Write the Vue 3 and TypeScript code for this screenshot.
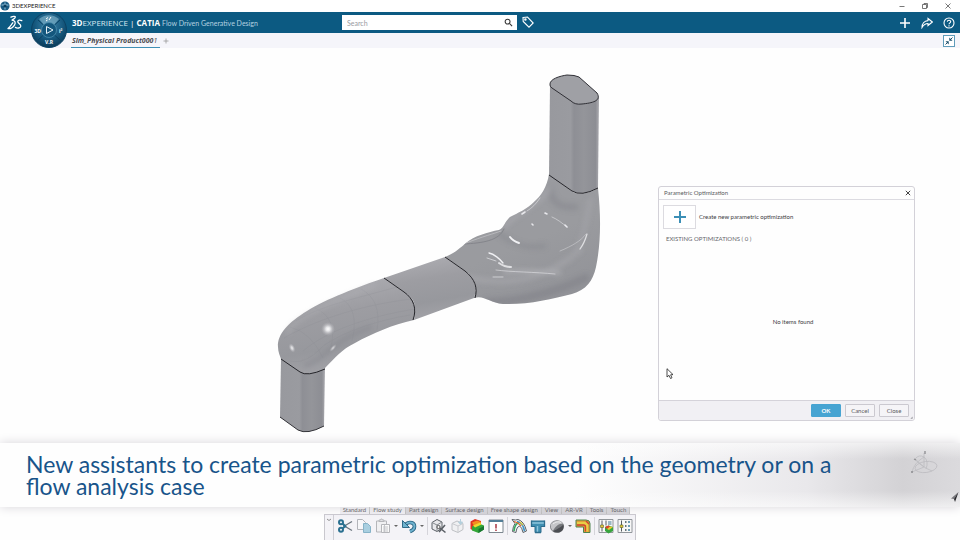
<script setup lang="ts">
import { ref } from 'vue'

type Tool = { id: string; label: string; kind: 'button' | 'caret' | 'sep' }

const query = ref('')
const sections: string[] = [
  'Standard', 'Flow study', 'Part design', 'Surface design', 'Free shape design',
  'View', 'AR-VR', 'Tools', 'Touch',
]
const activeSection = ref('Flow study')

const btn = (id: string, label: string): Tool => ({ id, label, kind: 'button' })
const caret = (id: string, label: string): Tool => ({ id, label, kind: 'caret' })
const sep = (id: string): Tool => ({ id, label: '', kind: 'sep' })

const tools: Tool[] = [
  btn('cut', 'Cut'), btn('copy', 'Copy'), btn('paste', 'Paste'), caret('paste-more', 'Paste options'),
  btn('undo', 'Undo'), caret('undo-more', 'Undo history'), sep('s1'),
  btn('update', 'Update'), btn('import', 'Import'), btn('result', 'Results'), btn('report', 'Report'), sep('s2'),
  btn('flow', 'Flow path'), btn('tee', 'Pipe'), btn('sphere', 'Material'), caret('sphere-more', 'Material options'),
  btn('elbow', 'Optimized shape'), sep('s3'),
  btn('tune', 'Parametric study'), btn('compare', 'Compare'),
]
</script>

<template>
  <div class="app">
    <header class="titlebar">
      <svg class="app-icon" viewBox="0 0 10 10" aria-hidden="true">
        <circle cx="5" cy="5" r="4.6" fill="#1b5c83" />
        <path d="M1.5 4h7M5 1.500v7" stroke="#9cc6dc" stroke-width="1" />
        <circle cx="5" cy="5" r="1.500" fill="#0b3c5c" />
      </svg>
      <span class="app-name">3DEXPERIENCE</span>
      <div class="window-buttons">
        <button aria-label="Minimize"><svg viewBox="0 0 8 8"><path d="M1.500 4.500h5" /></svg></button>
        <button aria-label="Restore"><svg viewBox="0 0 8 8"><path d="M1.500 2.500h4v4h-4zM3 2.500v-1h3.500v4h-1" /></svg></button>
        <button aria-label="Close window"><svg viewBox="0 0 8 8"><path d="M1.500 1.500l5 5M6.500 1.500l-5 5" /></svg></button>
      </div>
    </header>

    <div class="topbar">
      <svg class="ds-logo" viewBox="0 0 16 16" aria-label="Company logo">
        <g fill="none" stroke="#fff" stroke-width="1.300" stroke-linecap="round" stroke-linejoin="round">
          <path d="M4 2.200C6 1.200 8 1 8.300 1.800C8.500 2.600 7 3.800 5.200 5" />
          <path d="M5.200 5.200C8 5.800 9 7.400 7.600 9.800C6.200 12.200 3.400 13.800 1 13.600C2.600 12.400 4.800 9.200 5.800 7.800" />
          <path d="M14.800 5.600C13 4.600 10.800 5 10.800 6.600C10.900 8.600 14 9.200 13.800 11.200C13.600 13.200 10.200 13.600 8.400 12.400" />
        </g>
      </svg>
      <button class="compass" aria-label="Compass">
        <svg viewBox="0 0 36 36">
          <defs>
            <radialGradient id="compassBall" cx=".5" cy=".35" r=".65">
              <stop offset="0" stop-color="#3f86ab" />
              <stop offset=".6" stop-color="#175a80" />
              <stop offset="1" stop-color="#0a3a58" />
            </radialGradient>
          </defs>
          <circle cx="18" cy="18" r="17.500" fill="url(#compassBall)" stroke="#0b4264" />
          <path d="M8 7A15 15 0 0 1 28 7L23 13A7 7 0 0 0 13 13Z" fill="#8fbdd2" opacity=".55" />
          <path d="M7 8L12.500 13M29 8L23.500 13M7 28L12.500 23M29 28L23.500 23" stroke="#0b4264" />
          <circle cx="18" cy="18" r="7.500" fill="#14577d" stroke="#4b8dad" stroke-width=".8" />
          <path d="M15.500 14.500L22 18L15.500 21.500Z" fill="none" stroke="#e6f2f8" />
          <path d="M15 7l2-1.500M18 8l2-3M15 9l1.500-1" stroke="#fff" stroke-width="1" />
          <text x="3.500" y="20.500">3D</text>
          <text x="28" y="20.500">i²</text>
          <text x="14" y="31.500">V.R</text>
        </svg>
      </button>
      <div class="brand"><b>3D</b>EXPERIENCE <i>|</i> <b>CATIA</b> <span>Flow Driven Generative Design</span></div>
      <form class="search" role="search" @submit.prevent>
        <input v-model="query" type="search" aria-label="Search" placeholder="Search" />
        <button type="submit" aria-label="Run search">
          <svg viewBox="0 0 10 10"><circle cx="4" cy="4" r="2.700" /><path d="M6 6l3 3" /></svg>
        </button>
      </form>
      <button class="tag" aria-label="Tags">
        <svg viewBox="0 0 12 12"><path d="M1 1.500L5.500 1L11.200 7L7 11.200L1.200 5.500Z" /><circle cx="3.400" cy="3.600" r=".7" /></svg>
      </button>
      <div class="top-actions">
        <button aria-label="Add"><svg viewBox="0 0 12 12"><path d="M6 1v10M1 6h10" stroke-width="1.600" /></svg></button>
        <button aria-label="Share"><svg viewBox="0 0 12 12"><path d="M7 1.500L11.300 5L7 8.500V6.500C4 6.500 2.500 8 1 10.500C1 6.500 3.500 3.800 7 3.600Z" /></svg></button>
        <button aria-label="Help"><svg viewBox="0 0 12 12"><circle cx="6" cy="6" r="5" /><path d="M4.300 4.800C4.300 2.600 7.800 2.700 7.700 4.700C7.600 5.800 6 5.900 6 7.200M6 8.300v1.200" /></svg></button>
      </div>
    </div>

    <nav class="doc-tabs">
      <a class="doc-tab" href="#product">Sim_Physical Product000<span>1</span></a>
      <button class="new-tab" aria-label="New tab"><svg viewBox="0 0 6 6"><path d="M3 .5v5M.5 3h5" /></svg></button>
      <button class="fit" aria-label="Exit full view">
        <svg viewBox="0 0 12 12">
          <rect x=".5" y=".5" width="11" height="11" fill="#fff" stroke="#5f9cba" />
          <path d="M6.300 5.700V2.500L9.500 5.700ZM5.700 6.300V9.500L2.500 6.300Z" fill="#1a4f6c" />
          <path d="M7 5l2.500-2.500M5 7L2.500 9.500" stroke="#1a4f6c" />
        </svg>
      </button>
    </nav>

    <main class="stage">
      <svg class="model" viewBox="0 48 960 492" role="img" aria-label="Duct geometry">
        <defs>
          <linearGradient id="ductSide" x1="0" x2="1" y1="0" y2="0">
            <stop offset="0" stop-color="#98999e" />
            <stop offset=".43" stop-color="#9a9ba0" />
            <stop offset=".5" stop-color="#8e8f95" />
            <stop offset=".7" stop-color="#94959a" />
            <stop offset=".93" stop-color="#8d8e94" />
            <stop offset="1" stop-color="#ababb0" />
          </linearGradient>
          <linearGradient id="tube" x1=".35" y1="0" x2=".6" y2="1">
            <stop offset="0" stop-color="#adadb2" />
            <stop offset=".35" stop-color="#9d9da2" />
            <stop offset=".7" stop-color="#97989d" />
            <stop offset="1" stop-color="#a4a4a9" />
          </linearGradient>
          <linearGradient id="blob" x1=".2" y1="0" x2=".7" y2="1">
            <stop offset="0" stop-color="#9a9ba0" />
            <stop offset=".55" stop-color="#9a9b9f" />
            <stop offset="1" stop-color="#929398" />
          </linearGradient>
          <radialGradient id="glint">
            <stop offset="0" stop-color="#fff" />
            <stop offset=".3" stop-color="#f3f3f5" stop-opacity=".85" />
            <stop offset="1" stop-color="#b5b5ba" stop-opacity="0" />
          </radialGradient>
          <filter id="soft" x="-30%" y="-30%" width="160%" height="160%"><feGaussianBlur stdDeviation="2.500" /></filter>
          <filter id="fine" x="-30%" y="-30%" width="160%" height="160%"><feGaussianBlur stdDeviation=".6" /></filter>
          <clipPath id="blobClip">
            <path d="M549 174C547 187 541 196 534 202C527 209 518 213 510 217C505 221 504 228 499 230C488 232 474 236 466 243C460 248 455 253 445 257L468 273C475 280 477 289 474 298C484 295 490 303 503 304C527 305 552 299 572 294C586 290 593 281 596 267C601 243 601 216 598 188C589 194 578 195 573 192Z" />
          </clipPath>
        </defs>

        <g stroke-linejoin="round">
          <path d="M281 359L280 417L298 430Q307 435 324 426L325 368L300 350Z" fill="url(#ductSide)" />
          <path d="M280 417L298 430Q307 435 324 426" fill="none" stroke="#333338" />

          <path d="M384 278C358 287 326 299 307 311C289 322 277 334 278 347C278 352 280 356 281 359L300 372Q309 377 325 368C335 358 342 349 355 343C373 333 392 325 414 320C417 306 414 299 408 295Z" fill="url(#tube)" />
          <g fill="none" stroke="#85868d" stroke-width=".6" opacity=".32">
            <path d="M296 321C320 306 350 300 397 287M284 338C312 322 355 306 411 299M303 351C325 332 365 317 415 309M290 361C302 364 314 356 323 346C346 330 380 320 410 315" />
            <path d="M315 308Q338 318 331 347M340 298Q360 308 352 341M361 289Q382 300 377 330M290 327Q311 332 323 358" />
          </g>
          <path d="M287 334C292 318 332 302 375 285" fill="none" stroke="#b5b5b9" stroke-width="3" opacity=".5" filter="url(#soft)" />
          <path d="M304 366C326 360 334 338 372 327" fill="none" stroke="#83848b" stroke-width="4" opacity=".5" filter="url(#soft)" />
          <circle cx="328" cy="329" r="7" fill="url(#glint)" />
          <ellipse cx="292" cy="348" rx="3" ry="5" fill="url(#glint)" opacity=".8" transform="rotate(-25 292 348)" />
          <ellipse cx="333" cy="348" rx="2" ry="5" fill="url(#glint)" opacity=".6" transform="rotate(42 333 348)" />

          <path d="M384 278L445 257L468 273C475 280 477 289 474 298L414 320C417 306 414 299 408 295Z" fill="url(#tube)" />

          <path d="M549 174C547 187 541 196 534 202C527 209 518 213 510 217C505 221 504 228 499 230C488 232 474 236 466 243C460 248 455 253 445 257L468 273C475 280 477 289 474 298C484 295 490 303 503 304C527 305 552 299 572 294C586 290 593 281 596 267C601 243 601 216 598 188C589 194 578 195 573 192Z" fill="url(#blob)" />
          <g clip-path="url(#blobClip)" fill="none" stroke-linecap="round">
            <g filter="url(#soft)" opacity=".45">
              <path d="M550 190C552 203 560 208 575 207" stroke="#83848b" stroke-width="7" />
              <path d="M488 302C520 302 560 290 585 278" stroke="#7b7c83" stroke-width="8" />
              <path d="M500 234C512 244 525 249 544 246" stroke="#84858c" stroke-width="5" />
              <path d="M470 278C500 284 540 285 580 250" stroke="#adadb2" stroke-width="6" />
              <path d="M590 200C586 225 582 245 570 260" stroke="#a9a9ae" stroke-width="5" />
              <path d="M505 226C520 210 540 204 548 190" stroke="#b0b0b5" stroke-width="5" />
              <path d="M505 272C520 270 540 271 560 273" stroke="#d0d0d4" stroke-width="3" />
            </g>
            <path d="M464 244C482 243 499 241 504 229" stroke="#84858b" stroke-width="1" />
            <path d="M466 243C484 236 493 234 501 231" stroke="#b8b8bc" stroke-width="1" filter="url(#fine)" />
            <g stroke="#f0f0f3" filter="url(#fine)">
              <path d="M510 237C513 241 516 242 519 243" stroke-width="2" />
              <path d="M489 253C494 254 500 259 503 263" stroke-width="1.300" />
              <path d="M499 263C503 266 507 267 511 267" stroke-width="2" opacity=".8" />
              <path d="M496 270C510 272 535 272 555 274" stroke-width="1" opacity=".5" />
              <path d="M487 258L496 261M493 277L503 277" stroke-width="1" opacity=".6" />
              <path d="M522 214L525 212M532 224L533 225M545 213L547 214M565 225L567 227" stroke-width="1.600" opacity=".9" />
              <path d="M540 198C536 204 532 208 527 211" stroke-width="1" opacity=".5" />
              <path d="M552 217C557 219 562 223 567 227" stroke-width="1" opacity=".5" />
              <path d="M587 234C585 241 583 245 580 249" stroke-width="1.200" opacity=".8" />
              <path d="M560 251C572 246 581 241 586 234" stroke-width="1" opacity=".35" />
            </g>
          </g>

          <path d="M550 85L549 175L572 191Q581 197 598 188L599 98Z" fill="url(#ductSide)" />
          <path d="M550 85C549 79 560 76 567 75Q575 75 579 77L597 93C602 101 592 103 582 104Q575 105 571 101L552 88Q550 87 550 85Z" fill="#9fa0a5" stroke="#303036" />
          <g fill="none" stroke="#25252a">
            <path d="M549 175L572 191Q581 197 598 188" />
            <path d="M445 257L465 271C475 279 478 288 475 298" />
            <path d="M384 278L404 292C414 299 417 309 413 320" />
            <path d="M281 359L300 372Q307 377 325 369" />
          </g>
        </g>
      </svg>

      <section class="dialog" role="dialog" aria-labelledby="dialog-title">
        <header class="dialog-head">
          <h2 id="dialog-title">Parametric Optimization</h2>
          <button aria-label="Close dialog"><svg viewBox="0 0 6 6"><path d="M.8.8l4.400 4.400M5.200.8L.8 5.200" /></svg></button>
        </header>
        <div class="dialog-body">
          <div class="create-row">
            <button id="create" class="create" aria-label="Create new parametric optimization">
              <svg viewBox="0 0 14 14"><path d="M7 1v12M1 7h12" /></svg>
            </button>
            <label for="create">Create new parametric optimization</label>
          </div>
          <h3>EXISTING OPTIMIZATIONS ( 0 )</h3>
          <p class="empty">No items found</p>
        </div>
        <footer class="dialog-foot">
          <button class="primary">OK</button>
          <button>Cancel</button>
          <button>Close</button>
          <svg class="resize" viewBox="0 0 4 4" aria-hidden="true"><path d="M3.500 .5v3h-3z" fill="#99989e" /></svg>
        </footer>
      </section>

      <svg class="cursor" viewBox="0 0 8 12" aria-hidden="true">
        <path d="M1 .7V9L3 7.300L4.500 10.500L6 9.800L4.600 6.800L7 6.600Z" fill="#fff" stroke="#222" stroke-width=".8" />
      </svg>
    </main>

    <footer class="dock">
      <div class="sections" role="tablist">
        <button
          v-for="name in sections"
          :key="name"
          role="tab"
          :aria-selected="name === activeSection"
          :class="{ light: name === activeSection || name === 'Standard' }"
          @click="activeSection = name"
        >{{ name }}</button>
      </div>
      <div class="toolbar">
        <button class="grip" aria-label="Collapse toolbar"><svg viewBox="0 0 6 4"><path d="M1 1l2 1.500L5 1" /></svg></button>
        <template v-for="t in tools" :key="t.id">
          <span v-if="t.kind === 'sep'" class="sep"></span>
          <button v-else-if="t.kind === 'caret'" class="caret" :aria-label="t.label">
            <svg viewBox="0 0 6 4"><path d="M1 1h4L3 3Z" fill="#666" /></svg>
          </button>
          <button v-else class="tool" :aria-label="t.label">
            <svg viewBox="0 0 16 16" fill="none">
              <template v-if="t.id === 'cut'">
                <path d="M6.500 8.500L15 3.500M6.500 7.500L15 12.500" stroke="#6b757e" stroke-width="1.400" />
                <circle cx="4" cy="4.300" r="2" stroke="#2a7090" stroke-width="2" />
                <circle cx="4" cy="11.700" r="2" stroke="#2a7090" stroke-width="2" />
                <path d="M5.500 5.500L9 9M5.500 10.500L9 7.500" stroke="#2a7090" stroke-width="2.200" />
              </template>
              <template v-else-if="t.id === 'copy'">
                <path d="M1.500 1.500h5l3 3v7h-8z" fill="#f7f7f9" stroke="#b3b5ba" />
                <path d="M7.500 5.500h4l3 3v6h-7z" fill="#a9cfe0" stroke="#86b3c8" />
              </template>
              <template v-else-if="t.id === 'paste'">
                <path d="M1.500 3h10v11h-10z" fill="#f0f0f2" stroke="#b5b6ba" />
                <path d="M4 3.500V2h1.500a1 1 0 0 1 2 0H9v1.500z" fill="#e2e2e5" stroke="#b5b6ba" />
                <path d="M6.500 6.500h8v8h-8z" fill="#fafafa" stroke="#b5b6ba" />
                <path d="M8 9h5M8 11h5M8 13h5M9.500 7v7" stroke="#c5c6ca" />
              </template>
              <template v-else-if="t.id === 'undo'">
                <path d="M5 6C9 3 13.500 5 13.500 8.500C13.500 11 11.500 12.500 9 13.500" stroke="#245f7e" stroke-width="3.600" />
                <path d="M5 6C9 3 13.500 5 13.500 8.500C13.500 11 11.500 12.500 9 13.500" stroke="#6fb2ce" stroke-width="2" />
                <path d="M1.500 2.500v7h7z" fill="#6fb2ce" stroke="#245f7e" stroke-width=".9" />
              </template>
              <template v-else-if="t.id === 'update'">
                <path d="M1 4.500L6 1.500L11 4V10L6 13.500L1 11Z" fill="#e9e9ec" stroke="#5b6066" />
                <path d="M1 4.500L6 7L11 4M6 7v6" stroke="#85898e" />
                <path d="M7 8.500L14.500 14.500M14 7L8 14" stroke="#5a5f65" stroke-width="1.600" />
                <circle cx="7.500" cy="9" r="1.600" fill="#f5f5f5" stroke="#555" />
              </template>
              <template v-else-if="t.id === 'import'">
                <path d="M2 5.500L7 3L13 5.500V11.500L8 14.500L2 12Z" fill="#f0f0f2" stroke="#bfc1c5" />
                <path d="M2 5.500L8 8L13 5.500M8 8v6" stroke="#c9cacf" />
                <path d="M10.500 1v4M8.500 4l2 2.500l2-2.500z" fill="#b4cfdc" stroke="#b4cfdc" />
              </template>
              <template v-else-if="t.id === 'result'">
                <path d="M1.500 3.500L6 1L12 3V8L5 13L1.500 11Z" fill="#df3424" />
                <path d="M3 4.500L8 2.500L12 4V7L6 9Z" fill="#f39020" />
                <path d="M3 8.500L10 5.500L15 7.500V11.500L9.500 15L3 12.500Z" fill="#33a638" />
                <path d="M4 7.500L11 4.500L12.500 6.500L6 9.500Z" fill="#f2d930" />
                <path d="M9.500 11L15 8V11.500L9.500 15Z" fill="#187631" />
              </template>
              <template v-else-if="t.id === 'report'">
                <path d="M1 2h14v12.500H1z" fill="#fff" stroke="#7d8790" />
                <path d="M1 2h14v2H1z" fill="#527e97" />
                <path d="M8 6v4.500M8 11.500v1.500" stroke="#a83540" stroke-width="1.500" />
              </template>
              <template v-else-if="t.id === 'flow'">
                <path d="M1 1.500Q5 2.500 7 1.500Q13 3 15.500 13L12 14.500Q11 9 8.500 8Q5.500 9 5 14.500L1.500 13.500Q2 8 4 5.500Z" fill="#f5f5f6" stroke="#5b6167" />
                <path d="M3 13C3.500 8 5 5.500 8 4.500" stroke="#35a75e" stroke-width="1.600" />
                <path d="M6 3.500C10 4 12.500 8 13.500 13" stroke="#3e93c8" stroke-width="1.600" />
                <path d="M3 3.500L7 5L10 8" stroke="#e06a2d" stroke-width="1.300" />
                <path d="M9 4L12 7" stroke="#d9c73a" stroke-width="1.300" />
              </template>
              <template v-else-if="t.id === 'tee'">
                <path d="M1.500 3H14.500V8.500H11V14.500H5V8.500H1.500Z" fill="#3f8eb1" stroke="#2d6c8d" />
                <path d="M2 5H14M7.500 8V14" stroke="#8ec5dc" stroke-width="1.400" />
                <path d="M1.500 2.500v6.500M14.500 2.500v6.500M5 14.500h6" stroke="#2d6c8d" stroke-width="1.300" />
              </template>
              <template v-else-if="t.id === 'sphere'">
                <ellipse cx="8" cy="8.500" rx="7" ry="6.300" fill="#77797d" />
                <path d="M2 6C5 2 12 1.500 14 6C10 5 6 9 4 13Q1 10 2 6Z" fill="#c5c6c9" />
                <path d="M4 13C7 12 12 9 14.500 6.500Q15.500 12.500 10 14.500Q6 15 4 13Z" fill="#4b4d52" />
                <path d="M4 6C7 3.500 10 3.500 12 4.500" stroke="#efeff0" />
              </template>
              <template v-else-if="t.id === 'elbow'">
                <path d="M1 2H11Q15 2 15 5.500V14.500H8.500V9H1Z" fill="#e2a03a" stroke="#4f8450" />
                <path d="M2 4H10Q13 4 13 7V13.500H11V8Q11 6.500 9 6.500H2Z" fill="#e8cf45" />
                <path d="M2 7H8.500Q10.500 7 10.500 9V13.500M11 3L14 6" stroke="#cf4530" stroke-width="1.400" />
              </template>
              <template v-else-if="t.id === 'tune'">
                <path d="M1 1.500h14v13H1z" fill="#f7f7f7" stroke="#92979c" />
                <path d="M4 2.500v11M8 2.500v5" stroke="#555b60" />
                <path d="M2.500 7h3v2.500h-3z" fill="#e2c937" stroke="#63652c" stroke-width=".6" />
                <path d="M10 4h3.500M10 6h3.500" stroke="#3f7892" />
                <path d="M7 9L10.500 7.500L15 9V13L10.500 15.500L7 13Z" fill="#37a43d" />
                <path d="M7 9L10.500 7.500L12 8.500L9 11Z" fill="#e63b28" />
                <path d="M9 11L12 8.500L15 9L11 12Z" fill="#f2c832" />
              </template>
              <template v-else>
                <path d="M1 1.500h14v13H1z" fill="#f7f7f7" stroke="#92979c" />
                <path d="M4.500 2.500v11" stroke="#555b60" />
                <path d="M3 7h3v2.500H3z" fill="#e2c937" stroke="#63652c" stroke-width=".6" />
                <path d="M8 4h1.500M8 8h1.500M8 12h1.500" stroke="#3b4a53" stroke-width="1.500" />
                <path d="M11 4h2M11 8h2M11 12h2" stroke="#6b9db4" stroke-width="2" />
              </template>
            </svg>
          </button>
        </template>
      </div>
    </footer>

    <aside class="caption">
      <p>New assistants to create parametric optimization based on the geometry or on a flow analysis case</p>
      <svg class="axes" viewBox="0 0 28 26" aria-hidden="true">
        <g fill="none" stroke="#bdbcc0" stroke-width=".8">
          <ellipse cx="16" cy="17" rx="11" ry="5.500" transform="rotate(-8 16 17)" />
          <path d="M14 17V3M14 17L2 22M14 17L5 9M5 9Q9 4 14 7Q19 11 16 19M2 22Q4 13 14 7M5 9Q10 16 22 21" />
        </g>
        <path d="M15 1v3M1 22h2M4 9l2 1" stroke="#8c8c90" stroke-width="1.300" />
      </svg>
      <svg class="pointer" viewBox="0 0 10 12" aria-hidden="true">
        <path d="M8.500 1L1 7.500L4 8Z" fill="#77777c" /><path d="M8.500 1L4 8L5 11Z" fill="#242428" />
      </svg>
    </aside>
  </div>
</template>

<style>
body { margin: 0; background: #fefefe; }
</style>

<style scoped>
.app {
  position: relative;
  display: flex;
  flex-direction: column;
  min-height: 100vh;
  overflow: hidden;
  font: 6px/8px Lato, "Open Sans", sans-serif;
  color: #3c3c42;
}
button { padding: 0; border: 0; background: none; font: inherit; color: inherit; display: flex; align-items: center; justify-content: center; cursor: pointer; }
svg { display: block; }
h2, h3, p { margin: 0; font: inherit; }

.titlebar { display: flex; align-items: center; gap: 2px; height: 12px; padding: 0 8px 0 0; background: #fff; box-sizing: border-box; }
.app-icon { width: 10px; height: 10px; }
.app-name { color: #222; }
.window-buttons { display: flex; gap: 15px; margin-left: auto; }
.window-buttons svg { width: 8px; height: 8px; fill: none; stroke: #555; stroke-width: .8; }

.topbar { position: relative; display: flex; align-items: center; height: 21px; padding: 0 5px 0 7px; background: #0c5a82; box-sizing: border-box; }
.ds-logo { width: 16px; height: 16px; }
.compass { position: absolute; left: 31px; top: 0; width: 36px; height: 36px; z-index: 2; }
.compass svg { width: 36px; height: 36px; }
.compass text { font: 700 5px "Open Sans", sans-serif; fill: #fff; }
.brand { margin-left: 49px; font-family: "Open Sans", sans-serif; font-size: 8px; line-height: 12px; color: #d9e8f0; white-space: nowrap; }
.brand b { color: #fff; }
.brand i { font-style: normal; color: #fff; }
.brand span { font-family: Lato, sans-serif; font-size: 7px; color: #b4d1e0; }
.search { position: absolute; left: 50%; top: 3px; width: 175px; height: 15px; margin-left: -138px; display: flex; background: #fff; }
.search input { flex: 1; min-width: 0; border: 0; padding: 0 5px; background: none; font: 7px/8px Lato, sans-serif; outline: 0; appearance: none; }
.search input::placeholder { color: #9a9a9f; opacity: 1; }
.search button { width: 18px; }
.search svg { width: 9px; height: 9px; fill: none; stroke: #333; stroke-width: 1.200; }
.tag { position: absolute; left: 50%; top: 4px; margin-left: 42px; }
.tag svg, .top-actions svg { width: 12px; height: 12px; fill: none; stroke: #fff; stroke-width: 1.100; }
.top-actions { display: flex; gap: 10px; margin-left: auto; }

.doc-tabs { display: flex; align-items: stretch; height: 15px; padding: 0 5px 0 71px; background: #f5f5fa; box-sizing: border-box; }
.doc-tab { display: flex; align-items: center; padding: 1px 3px 0 1px; border-bottom: 1px solid #3e8fb5; font: italic 700 7px/13px "Open Sans", sans-serif; color: #4c4c50; text-decoration: none; }
.doc-tab span { font-weight: 400; }
.new-tab { margin-left: 3px; }
.new-tab svg { width: 6px; height: 6px; fill: none; stroke: #999; stroke-width: .8; }
.fit { margin-left: auto; }
.fit svg { width: 12px; height: 12px; fill: none; }

.stage { position: relative; flex: 1; min-height: 450px; }
.model { position: absolute; left: 0; top: 0; width: 100%; aspect-ratio: 960 / 492; }
.dialog { position: absolute; right: 45px; top: 138px; width: 257px; height: 235px; display: flex; flex-direction: column; box-sizing: border-box; border: 1px solid #d3d1d8; border-radius: 3px; background: #fefefe; }
.dialog-head { display: flex; align-items: center; justify-content: space-between; height: 12px; padding: 0 3px 0 5px; border-bottom: 1px solid #dcdbe1; color: #5a5a60; }
.dialog-head svg { width: 6px; height: 6px; fill: none; stroke: #444; stroke-width: 1; }
.dialog-body { flex: 1; display: flex; flex-direction: column; padding: 5px 4px; }
.create-row { display: flex; align-items: center; gap: 3px; }
.create { width: 33px; height: 24px; box-sizing: border-box; border: 1px solid #dcdbe0; background: #fff; }
.create svg { width: 14px; height: 14px; stroke: #3c8fb6; stroke-width: 2; }
.dialog-body h3 { margin: 6px 0 0 3px; color: #66666b; }
.empty { margin: auto; padding-top: 6px; padding-left: 13px; }
.dialog-foot { position: relative; display: flex; align-items: center; justify-content: flex-end; gap: 4px; height: 19px; padding: 0 5px; border-top: 1px solid #d5d3da; background: #f1f0f4; border-radius: 0 0 3px 3px; }
.dialog-foot button { width: 30px; height: 13px; box-sizing: border-box; border: 1px solid #cbc9d0; border-radius: 1px; background: #f5f4f7; color: #5b5b61; }
.dialog-foot .primary { border-color: #47a4d2; background: #47a4d2; color: #fff; font-weight: 700; }
.resize { position: absolute; right: 1px; bottom: 1px; width: 3px; height: 3px; }
.cursor { position: absolute; right: 286px; top: 320px; width: 8px; height: 12px; }

.dock { position: relative; display: flex; flex-direction: column; align-items: center; }
.sections { display: flex; height: 10px; margin-left: 10px; background: #d2d1d6; }
.sections button { padding: 1px 3px 0; border-right: 1px solid #bbb; line-height: 10px; color: #3c3c40; }
.sections .light { background: #efeef2; }
.toolbar { display: flex; align-items: center; gap: 1px; height: 26px; box-sizing: border-box; border: 1px solid #c9c8ce; border-bottom: 0; background: #f4f3f7; padding: 0 1px 3px 0; }
.grip { align-self: stretch; align-items: flex-start; width: 9px; padding-top: 3px; border-right: 1px solid #cfced4; margin: 0 1px -3px 0; }
.grip svg, .caret svg { width: 6px; height: 4px; fill: none; stroke: #777; stroke-width: .8; }
.caret svg { stroke: none; }
.tool { width: 18px; height: 18px; }
.tool svg { width: 16px; height: 16px; }
.sep { width: 1px; height: 18px; margin: 0 1px; background: #d5d4da; }

.caption {
  position: absolute; left: 0; right: 0; bottom: 33px; height: 64px; box-sizing: border-box;
  display: flex; align-items: center; padding: 0 0 1px 26px;
  background:
    linear-gradient(180deg, #fefefe99 0, #fefefe00 25%, #fefefe00 75%, #fefefe99 100%),
    linear-gradient(90deg, #fefefe 0, #fefefe 60%, #e9e8eb 84%, #d3d2d5 94%, #dbdadd 100%);
  box-shadow: 0 0 10px #d8d6db;
}
.caption p { flex: 1; max-width: 830px; font-family: Lato, sans-serif; font-size: 23px; line-height: 22px; color: #18548a; }
.axes { width: 28px; height: 26px; position: absolute; right: 22px; top: 7px; }
.pointer { width: 10px; height: 12px; position: absolute; right: 0; bottom: 4px; }
</style>
